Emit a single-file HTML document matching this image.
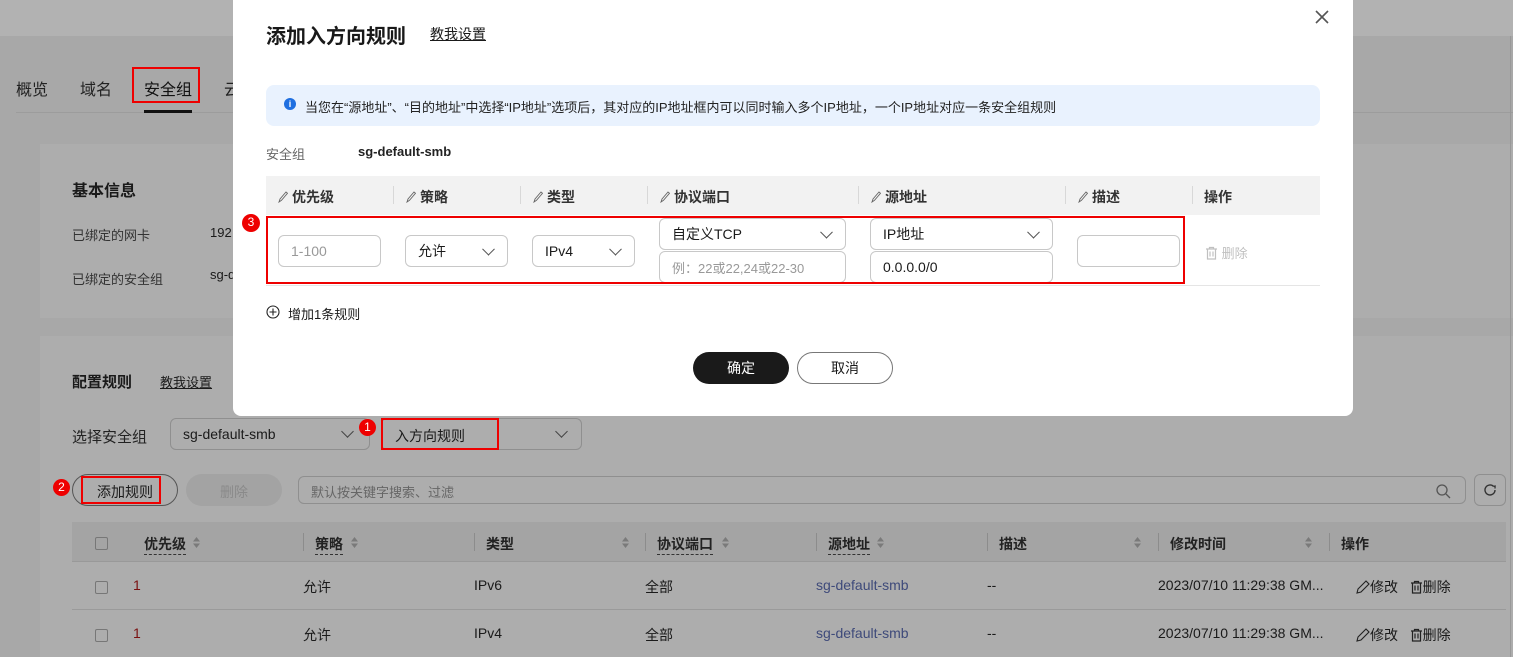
<!DOCTYPE html>
<html><head><meta charset="utf-8"><style>
*{box-sizing:border-box;margin:0;padding:0}
body{width:1513px;height:657px;overflow:hidden;position:relative;background:#a8a8a8;font-family:"Liberation Sans","Noto Sans CJK SC",sans-serif;font-size:14px;color:#1a1a1a}
.a{position:absolute;white-space:nowrap}
.red{border:2px solid #e00;position:absolute}
.badge{position:absolute;width:17px;height:17px;border-radius:50%;background:#e00;color:#fff;font-size:12px;text-align:center;line-height:17px}
.inp{position:absolute;border:1px solid #c8c8c8;border-radius:6px;background:#fff;padding-left:12px;font-size:14px;display:flex;align-items:center}
.chev{position:absolute;right:14px;top:50%;width:9px;height:9px;border-right:1.3px solid #555;border-bottom:1.3px solid #555;transform:translateY(-70%) rotate(45deg)}
.gchev{position:absolute;width:9px;height:9px;border-right:1.3px solid #444;border-bottom:1.3px solid #444;transform:rotate(45deg)}
.th{position:absolute;font-size:14px;color:#333;font-weight:bold}
.pen{display:inline-block;width:10px;height:12px;margin-right:4px;vertical-align:-1px}
.sep{position:absolute;width:1px;height:18px;background:#d8d8d8}
.bth{position:absolute;font-weight:bold;color:#222}
.ul{border-bottom:1px dashed #333;padding-bottom:2px}
.cb{position:absolute;width:13px;height:13px;border:1px solid #777;border-radius:2px}
.srt{position:absolute;width:9px;height:13px}
</style></head><body>
<div class="a" style="left:0;top:0;width:1513px;height:36px;background:#b2b2b2"></div>
<div class="a" style="left:16px;top:76px;font-size:16px;color:#222">概览</div>
<div class="a" style="left:80px;top:76px;font-size:16px;color:#222">域名</div>
<div class="a" style="left:144px;top:76px;font-size:16px;color:#111">安全组</div>
<div class="a" style="left:224px;top:76px;font-size:16px;color:#222">云</div>
<div class="red" style="left:132px;top:67px;width:68px;height:36px"></div>
<div class="a" style="left:16px;top:112px;width:1497px;height:1px;background:#9c9c9c"></div>
<div class="a" style="left:144px;top:110px;width:48px;height:3px;background:#111"></div>
<div class="a" style="left:40px;top:144px;width:1473px;height:174px;background:#adadad"></div>
<div class="a" style="left:72px;top:177px;font-size:16px;font-weight:bold">基本信息</div>
<div class="a" style="left:72px;top:225px;font-size:13px;color:#333">已绑定的网卡</div>
<div class="a" style="left:210px;top:225px;font-size:13px">192</div>
<div class="a" style="left:72px;top:269px;font-size:13px;color:#333">已绑定的安全组</div>
<div class="a" style="left:210px;top:267px;font-size:13px">sg-d</div>
<div class="a" style="left:40px;top:336px;width:1473px;height:321px;background:#adadad"></div>
<div class="a" style="left:72px;top:371px;font-size:15px;font-weight:bold">配置规则</div>
<div class="a" style="left:160px;top:372px;font-size:13px;text-decoration:underline">教我设置</div>
<div class="a" style="left:72px;top:426px;font-size:15px;color:#222">选择安全组</div>
<div class="a" style="left:170px;top:418px;width:200px;height:32px;border:1px solid #8f8f8f;border-radius:6px"></div>
<div class="a" style="left:183px;top:426px;font-size:14px">sg-default-smb</div>
<div class="gchev" style="left:343px;top:427px"></div>
<div class="a" style="left:381px;top:418px;width:201px;height:32px;border:1px solid #8f8f8f;border-radius:6px"></div>
<div class="a" style="left:395px;top:426px;font-size:14px">入方向规则</div>
<div class="gchev" style="left:557px;top:427px"></div>
<div class="red" style="left:381px;top:418px;width:118px;height:32px"></div>
<div class="badge" style="left:359px;top:419px">1</div>
<div class="a" style="left:72px;top:474px;width:106px;height:32px;border:1px solid #555;border-radius:16px"></div>
<div class="a" style="left:97px;top:482px;font-size:14px">添加规则</div>
<div class="red" style="left:81px;top:476px;width:80px;height:28px"></div>
<div class="badge" style="left:53px;top:479px">2</div>
<div class="a" style="left:186px;top:474px;width:96px;height:32px;border-radius:16px;background:#a3a3a3"></div>
<div class="a" style="left:220px;top:482px;font-size:14px;color:#8a8a8a">删除</div>
<div class="a" style="left:298px;top:476px;width:1168px;height:28px;border:1px solid #8f8f8f;border-radius:6px"></div>
<div class="a" style="left:311px;top:482px;font-size:13px;color:#666">默认按关键字搜索、过滤</div>
<svg class="a" style="left:1435px;top:483px" width="16" height="16" viewBox="0 0 16 16"><circle cx="7" cy="7" r="5" fill="none" stroke="#555" stroke-width="1.3"/><path d="M11 11l4 4" stroke="#555" stroke-width="1.3"/></svg>
<div class="a" style="left:1474px;top:474px;width:32px;height:32px;border:1px solid #8f8f8f;border-radius:6px"></div>
<svg class="a" style="left:1481px;top:481px" width="18" height="18" viewBox="0 0 18 18"><path d="M14 9a5 5 0 1 1-1.5-3.6" fill="none" stroke="#333" stroke-width="1.4"/><path d="M12.5 5.4l1.6-.3-.1 2.4" fill="none" stroke="#333" stroke-width="1.3"/></svg>
<div class="a" style="left:72px;top:522px;width:1434px;height:40px;background:#a4a4a4;border-bottom:1px solid #999"></div>
<div class="cb" style="left:95px;top:537px"></div>
<div class="bth" style="left:144px;top:534px"><span class="ul">优先级</span></div>
<div class="bth" style="left:315px;top:534px"><span class="ul">策略</span></div>
<div class="bth" style="left:486px;top:534px">类型</div>
<div class="bth" style="left:657px;top:534px"><span class="ul">协议端口</span></div>
<div class="bth" style="left:828px;top:534px"><span class="ul">源地址</span></div>
<div class="bth" style="left:999px;top:534px">描述</div>
<div class="bth" style="left:1170px;top:534px">修改时间</div>
<div class="bth" style="left:1341px;top:534px">操作</div>
<svg class="srt" style="left:192px;top:536px" viewBox="0 0 9 13"><path d="M4.5 1L8 5.5H1zM4.5 12L8 7.5H1z" fill="#7a7a7a"/></svg>
<svg class="srt" style="left:350px;top:536px" viewBox="0 0 9 13"><path d="M4.5 1L8 5.5H1zM4.5 12L8 7.5H1z" fill="#7a7a7a"/></svg>
<svg class="srt" style="left:621px;top:536px" viewBox="0 0 9 13"><path d="M4.5 1L8 5.5H1zM4.5 12L8 7.5H1z" fill="#7a7a7a"/></svg>
<svg class="srt" style="left:721px;top:536px" viewBox="0 0 9 13"><path d="M4.5 1L8 5.5H1zM4.5 12L8 7.5H1z" fill="#7a7a7a"/></svg>
<svg class="srt" style="left:876px;top:536px" viewBox="0 0 9 13"><path d="M4.5 1L8 5.5H1zM4.5 12L8 7.5H1z" fill="#7a7a7a"/></svg>
<svg class="srt" style="left:1133px;top:536px" viewBox="0 0 9 13"><path d="M4.5 1L8 5.5H1zM4.5 12L8 7.5H1z" fill="#7a7a7a"/></svg>
<svg class="srt" style="left:1304px;top:536px" viewBox="0 0 9 13"><path d="M4.5 1L8 5.5H1zM4.5 12L8 7.5H1z" fill="#7a7a7a"/></svg>
<div class="sep" style="left:303px;top:533px;background:#8c8c8c"></div>
<div class="sep" style="left:474px;top:533px;background:#8c8c8c"></div>
<div class="sep" style="left:645px;top:533px;background:#8c8c8c"></div>
<div class="sep" style="left:816px;top:533px;background:#8c8c8c"></div>
<div class="sep" style="left:987px;top:533px;background:#8c8c8c"></div>
<div class="sep" style="left:1158px;top:533px;background:#8c8c8c"></div>
<div class="sep" style="left:1329px;top:533px;background:#8c8c8c"></div>
<div class="a" style="left:72px;top:609px;width:1434px;height:1px;background:#9a9a9a"></div>
<div class="cb" style="left:95px;top:581px"></div>
<div class="cb" style="left:95px;top:629px"></div>
<div class="a" style="left:133px;top:577px;color:#7a1010">1</div>
<div class="a" style="left:133px;top:625px;color:#7a1010">1</div>
<div class="a" style="left:303px;top:577px">允许</div><div class="a" style="left:303px;top:625px">允许</div>
<div class="a" style="left:474px;top:577px">IPv6</div><div class="a" style="left:474px;top:625px">IPv4</div>
<div class="a" style="left:645px;top:577px">全部</div><div class="a" style="left:645px;top:625px">全部</div>
<div class="a" style="left:816px;top:577px;color:#3e4a7a">sg-default-smb</div><div class="a" style="left:816px;top:625px;color:#3e4a7a">sg-default-smb</div>
<div class="a" style="left:987px;top:577px">--</div><div class="a" style="left:987px;top:625px">--</div>
<div class="a" style="left:1158px;top:577px">2023/07/10 11:29:38 GM...</div><div class="a" style="left:1158px;top:625px">2023/07/10 11:29:38 GM...</div>
<div class="a" style="left:1356px;top:577px"><svg width="14" height="14" viewBox="0 0 14 14" style="vertical-align:-2px"><path d="M1 13l1-4 8-8 3 3-8 8z" fill="none" stroke="#222" stroke-width="1.1"/></svg>修改 &nbsp;&nbsp;<svg width="13" height="14" viewBox="0 0 13 14" style="vertical-align:-2px"><path d="M1 3h11M4.5 3V1.5h4V3M2.5 3v10h8V3M5 5.5v5M8 5.5v5" fill="none" stroke="#222" stroke-width="1.2"/></svg>删除</div>
<div class="a" style="left:1356px;top:625px"><svg width="14" height="14" viewBox="0 0 14 14" style="vertical-align:-2px"><path d="M1 13l1-4 8-8 3 3-8 8z" fill="none" stroke="#222" stroke-width="1.1"/></svg>修改 &nbsp;&nbsp;<svg width="13" height="14" viewBox="0 0 13 14" style="vertical-align:-2px"><path d="M1 3h11M4.5 3V1.5h4V3M2.5 3v10h8V3M5 5.5v5M8 5.5v5" fill="none" stroke="#222" stroke-width="1.2"/></svg>删除</div>
<div class="a" style="left:1510px;top:36px;width:1px;height:621px;background:#999"></div>

<!-- modal -->
<div class="a" style="left:233px;top:0;width:1120px;height:416px;background:#fff;border-radius:0 0 8px 8px"></div>
<div class="a" style="left:266px;top:20px;font-size:20px;font-weight:bold;color:#191919">添加入方向规则</div>
<div class="a" style="left:430px;top:24px;font-size:14px;text-decoration:underline">教我设置</div>
<svg class="a" style="left:1314px;top:9px" width="16" height="16" viewBox="0 0 16 16"><path d="M2 2l12 12M14 2L2 14" stroke="#555" stroke-width="1.6"/></svg>
<div class="a" style="left:266px;top:85px;width:1054px;height:41px;background:#e9f2fe;border-radius:8px"></div>
<div class="a" style="left:284px;top:98px;width:12px;height:12px;border-radius:50%;background:#1f6fe0;color:#fff;font-size:9px;text-align:center;line-height:12px;font-weight:bold">i</div>
<div class="a" style="left:305px;top:97px;font-size:13px;color:#222">当您在“源地址”、“目的地址”中选择“IP地址”选项后，其对应的IP地址框内可以同时输入多个IP地址，一个IP地址对应一条安全组规则</div>
<div class="a" style="left:266px;top:144px;font-size:13px;color:#666">安全组</div>
<div class="a" style="left:358px;top:144px;font-size:13px;font-weight:bold;color:#222">sg-default-smb</div>
<div class="a" style="left:266px;top:176px;width:1054px;height:39px;background:#f2f2f2"></div>
<div class="th" style="left:278px;top:187px"><svg class="pen" viewBox="0 0 10 12"><path d="M1 11l1-3 6-7 1.5 1.3-6 7z" fill="none" stroke="#666" stroke-width=".9"/></svg>优先级</div>
<div class="th" style="left:406px;top:187px"><svg class="pen" viewBox="0 0 10 12"><path d="M1 11l1-3 6-7 1.5 1.3-6 7z" fill="none" stroke="#666" stroke-width=".9"/></svg>策略</div>
<div class="th" style="left:533px;top:187px"><svg class="pen" viewBox="0 0 10 12"><path d="M1 11l1-3 6-7 1.5 1.3-6 7z" fill="none" stroke="#666" stroke-width=".9"/></svg>类型</div>
<div class="th" style="left:660px;top:187px"><svg class="pen" viewBox="0 0 10 12"><path d="M1 11l1-3 6-7 1.5 1.3-6 7z" fill="none" stroke="#666" stroke-width=".9"/></svg>协议端口</div>
<div class="th" style="left:871px;top:187px"><svg class="pen" viewBox="0 0 10 12"><path d="M1 11l1-3 6-7 1.5 1.3-6 7z" fill="none" stroke="#666" stroke-width=".9"/></svg>源地址</div>
<div class="th" style="left:1078px;top:187px"><svg class="pen" viewBox="0 0 10 12"><path d="M1 11l1-3 6-7 1.5 1.3-6 7z" fill="none" stroke="#666" stroke-width=".9"/></svg>描述</div>
<div class="th" style="left:1204px;top:187px">操作</div>
<div class="sep" style="left:393px;top:186px"></div>
<div class="sep" style="left:520px;top:186px"></div>
<div class="sep" style="left:647px;top:186px"></div>
<div class="sep" style="left:858px;top:186px"></div>
<div class="sep" style="left:1065px;top:186px"></div>
<div class="sep" style="left:1192px;top:186px"></div>
<div class="a" style="left:266px;top:285px;width:1054px;height:1px;background:#e5e5e5"></div>
<div class="inp" style="left:278px;top:235px;width:103px;height:32px;color:#999">1-100</div>
<div class="inp" style="left:405px;top:235px;width:103px;height:32px">允许<i class="chev"></i></div>
<div class="inp" style="left:532px;top:235px;width:103px;height:32px">IPv4<i class="chev"></i></div>
<div class="inp" style="left:659px;top:218px;width:187px;height:32px">自定义TCP<i class="chev"></i></div>
<div class="inp" style="left:659px;top:251px;width:187px;height:32px;color:#999;font-size:13px">例：22或22,24或22-30</div>
<div class="inp" style="left:870px;top:218px;width:183px;height:32px">IP地址<i class="chev"></i></div>
<div class="inp" style="left:870px;top:251px;width:183px;height:32px">0.0.0.0/0</div>
<div class="inp" style="left:1077px;top:235px;width:103px;height:32px"></div>
<div class="a" style="left:1205px;top:243px;font-size:13px;color:#c0c0c0"><svg width="13" height="14" viewBox="0 0 13 14" style="vertical-align:-2px"><path d="M1 3h11M4.5 3V1.5h4V3M2.5 3v10h8V3M5 5.5v5M8 5.5v5" fill="none" stroke="#c0c0c0" stroke-width="1.2"/></svg> 删除</div>
<div class="red" style="left:266px;top:216px;width:919px;height:68px"></div>
<div class="badge" style="left:242px;top:214px;width:18px;height:18px">3</div>
<svg class="a" style="left:266px;top:305px" width="14" height="14" viewBox="0 0 14 14"><circle cx="7" cy="7" r="6" fill="none" stroke="#222" stroke-width="1.1"/><path d="M7 3.5v7M3.5 7h7" stroke="#222" stroke-width="1.1"/></svg>
<div class="a" style="left:288px;top:304px;font-size:13px">增加1条规则</div>
<div class="a" style="left:693px;top:352px;width:96px;height:32px;border-radius:16px;background:#1a1a1a;color:#fff;text-align:center;line-height:32px;font-size:14px">确定</div>
<div class="a" style="left:797px;top:352px;width:96px;height:32px;border-radius:16px;border:1px solid #777;text-align:center;line-height:30px;font-size:14px">取消</div>
</body></html>
